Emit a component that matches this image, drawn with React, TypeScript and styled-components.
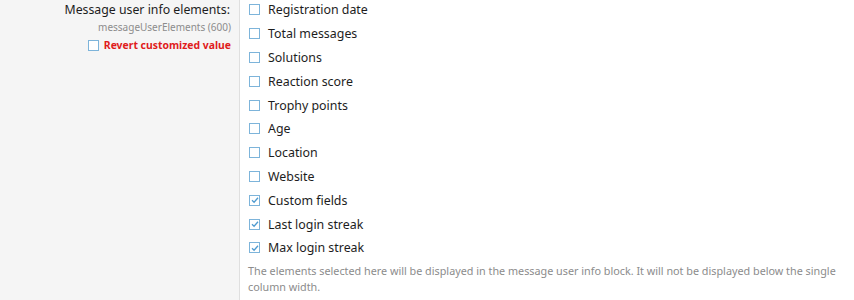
import styled, { createGlobalStyle } from 'styled-components';

const GlobalStyle = createGlobalStyle`
  html, body {
    margin: 0;
    padding: 0;
    background: #fff;
  }
  body {
    font-family: 'Segoe UI', 'Noto Sans', 'Open Sans', sans-serif;
    color: #141414;
  }
`;

const FormRow = styled.div`
  display: flex;
  width: 854px;
  height: 300px;
  overflow: hidden;
`;

const LabelCell = styled.div`
  flex: 0 0 231px;
  padding-right: 8px;
  background: #f5f5f5;
  border-right: 1px solid #dfdfdf;
  text-align: right;
  margin-top: -2px;
`;

const Label = styled.div`
  font-size: 12.3px;
  line-height: 24px;
  color: #1d1d1d;
  padding-right: 1px;
`;

const Hint = styled.div`
  font-size: 10px;
  line-height: 16px;
  color: #8c8c8c;
  margin-top: -3px;
`;

const Revert = styled.label`
  display: flex;
  justify-content: flex-end;
  align-items: center;
  margin-top: 3px;
  font-size: 10.4px;
  font-weight: 700;
  color: #e01c1c;
  line-height: 14px;
`;

const InputCell = styled.div`
  flex: 1;
  padding: 0 4px 0 8px;
  margin-top: -2px;
`;

const List = styled.ul`
  list-style: none;
  margin: 0;
  padding: 0;
`;

const Item = styled.li`
  display: flex;
  align-items: center;
  height: 23.8px;
  font-size: 12.4px;
  color: #1d1d1d;
`;

const Box = styled.span<{ $tight?: boolean }>`
  flex: 0 0 auto;
  box-sizing: border-box;
  width: 11px;
  height: 11px;
  margin: ${({ $tight }) => ($tight ? '0 5px 0 0' : '0 8px 0 1px')};
  border: 1px solid #7db4da;
  background: #fff;
  display: inline-flex;
  align-items: center;
  justify-content: center;
`;

const Explain = styled.div`
  margin-top: 3px;
  font-size: 10.8px;
  line-height: 16px;
  color: #8c8c8c;
`;

const Check = () => (
  <svg width="8" height="8" viewBox="0 0 8 8">
    <path d="M1 4.2 L3.1 6.2 L7 1.8" fill="none" stroke="#4f9bd0" strokeWidth="1.3" />
  </svg>
);

const items: [string, boolean][] = [
  ['Registration date', false],
  ['Total messages', false],
  ['Solutions', false],
  ['Reaction score', false],
  ['Trophy points', false],
  ['Age', false],
  ['Location', false],
  ['Website', false],
  ['Custom fields', true],
  ['Last login streak', true],
  ['Max login streak', true],
];

export default function App() {
  return (
    <>
      <GlobalStyle />
      <FormRow>
        <LabelCell>
          <Label>Message user info elements:</Label>
          <Hint>messageUserElements (600)</Hint>
          <Revert>
            <Box $tight />
            Revert customized value
          </Revert>
        </LabelCell>
        <InputCell>
          <List>
            {items.map(([name, checked]) => (
              <Item key={name}>
                <Box>{checked && <Check />}</Box>
                {name}
              </Item>
            ))}
          </List>
          <Explain>
            The elements selected here will be displayed in the message user info block. It will not be displayed below the single column width.
          </Explain>
        </InputCell>
      </FormRow>
    </>
  );
}
